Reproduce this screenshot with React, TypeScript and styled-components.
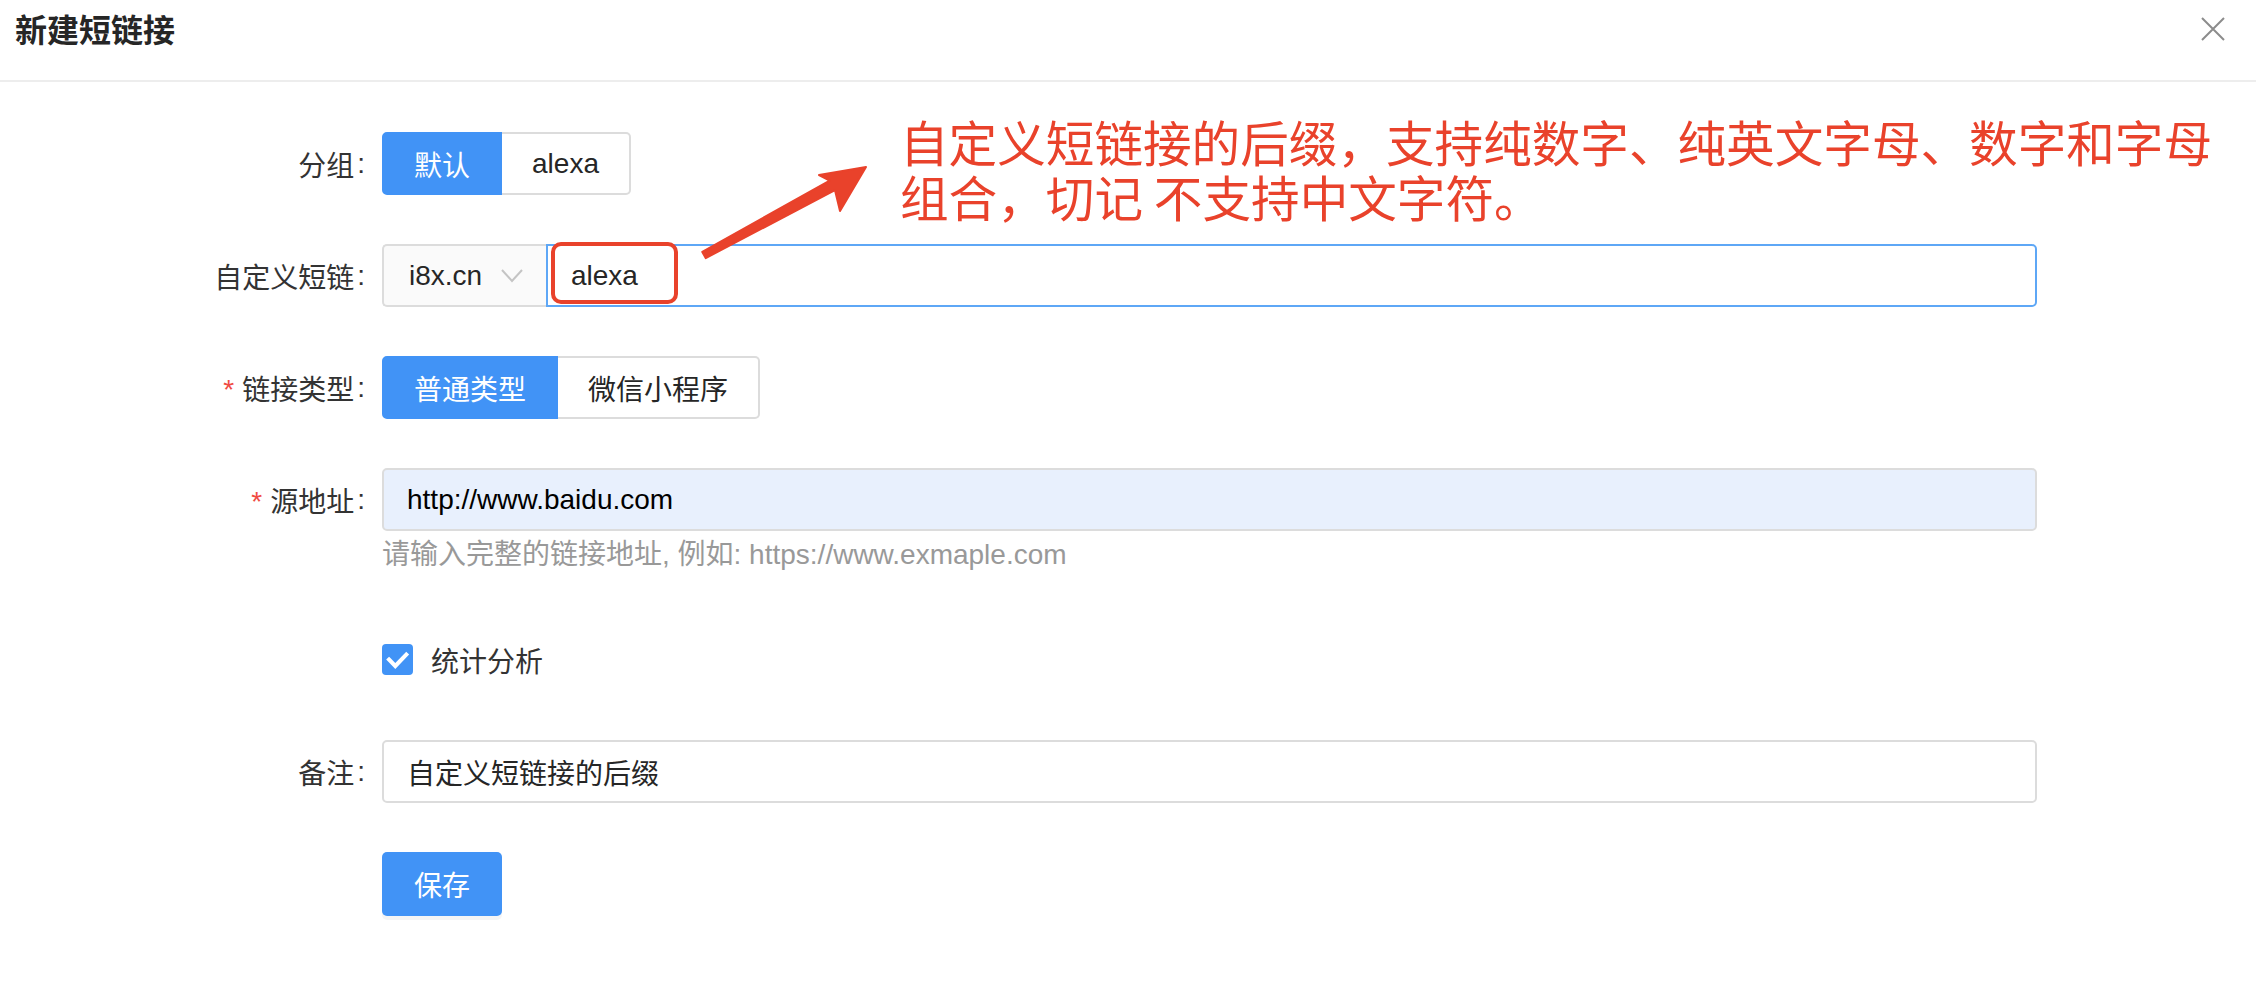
import React from "react";
import styled, { createGlobalStyle } from "styled-components";

const GlobalStyle = createGlobalStyle`
  html, body {
    margin: 0;
    padding: 0;
    background: #ffffff;
  }
  body {
    font-family: "Liberation Sans", "Noto Sans CJK SC", sans-serif;
    color: #262626;
  }
  * { box-sizing: border-box; }
`;

const BLUE = "#4193f6";
const RED = "#e9422b";

const Page = styled.div`
  position: relative;
  width: 2256px;
  height: 992px;
  background: #fff;
  overflow: hidden;
`;

const Header = styled.header`
  height: 82px;
  border-bottom: 2px solid #ededed;
  display: flex;
  align-items: flex-start;
  justify-content: space-between;
  padding: 12px 31px 0 15px;
`;

const Title = styled.h1`
  margin: 0;
  font-size: 32px;
  line-height: 32px;
  font-weight: 700;
  color: #262626;
  font-family: "Noto Sans CJK SC", sans-serif;
`;

const CloseButton = styled.button`
  border: none;
  background: transparent;
  padding: 0;
  margin-top: 5px;
  width: 24px;
  height: 24px;
  display: flex;
  cursor: pointer;
`;

const Body = styled.div`
  padding-top: 50px;
`;

const Form = styled.form`
  display: flex;
  flex-direction: column;
`;

const FormItem = styled.div<{ $gap?: number }>`
  display: grid;
  grid-template-columns: 382px 1655px;
  margin-bottom: ${(p) => (p.$gap ?? 49)}px;
`;

const Label = styled.label`
  height: 63px;
  display: flex;
  align-items: center;
  justify-content: flex-end;
  padding-right: 17px;
  font-size: 28px;
  color: #333;
  font-family: "Noto Sans CJK SC", sans-serif;
  white-space: nowrap;
`;

const Star = styled.span`
  color: #f04b43;
  font-family: "Liberation Sans", sans-serif;
  font-size: 28px;
  margin-right: 8px;
  position: relative;
  top: 2px;
`;

const Colon = styled.span`
  margin-left: 3px;
  font-family: "Liberation Sans", sans-serif;
`;

const Control = styled.div`
  display: flex;
  flex-direction: column;
  align-items: flex-start;
`;

const Segmented = styled.div`
  display: flex;
  height: 63px;
`;

const SegButton = styled.button<{ $active?: boolean; $first?: boolean; $last?: boolean }>`
  height: 63px;
  padding: 0 30px;
  font-size: 28px;
  font-family: "Liberation Sans", "Noto Sans CJK SC", sans-serif;
  border: 2px solid ${(p) => (p.$active ? BLUE : "#dcdcdc")};
  ${(p) => (!p.$first ? "border-left: none;" : "")}
  background: ${(p) => (p.$active ? BLUE : "#fff")};
  color: ${(p) => (p.$active ? "#fff" : "#262626")};
  border-radius: ${(p) =>
    p.$first ? "5px 0 0 5px" : p.$last ? "0 5px 5px 0" : "0"};
  cursor: pointer;
`;

const InputGroup = styled.div`
  position: relative;
  display: flex;
  width: 1655px;
  height: 63px;
`;

const Select = styled.div`
  flex: none;
  width: 164px;
  height: 63px;
  background: #fafafa;
  border: 2px solid #dcdcdc;
  border-right: none;
  border-radius: 5px 0 0 5px;
  display: flex;
  align-items: center;
  justify-content: space-between;
  padding: 0 23px 0 25px;
  font-size: 28px;
  color: #262626;
`;

const TextInput = styled.input<{ $focus?: boolean; $filled?: boolean; $grouped?: boolean }>`
  flex: ${(p) => (p.$grouped ? "1 1 auto" : "none")};
  width: ${(p) => (p.$grouped ? "auto" : "1655px")};
  min-width: 0;
  height: 63px;
  border: 2px solid ${(p) => (p.$focus ? "#5ea7f6" : "#dcdcdc")};
  border-radius: ${(p) => (p.$grouped ? "0 5px 5px 0" : "5px")};
  background: ${(p) => (p.$filled ? "#e8f0fd" : "#fff")};
  padding: 0 23px;
  font-size: 28px;
  font-family: "Liberation Sans", "Noto Sans CJK SC", sans-serif;
  color: ${(p) => (p.$filled ? "#000" : "#262626")};
  outline: none;
`;

const Help = styled.div`
  font-size: 28px;
  line-height: 44px;
  height: 48px;
  padding-top: 2px;
  color: #999;
  font-family: "Liberation Sans", "Noto Sans CJK SC", sans-serif;
`;

const Highlight = styled.div`
  position: absolute;
  left: 169px;
  top: -2px;
  width: 127px;
  height: 62px;
  border: 4px solid ${RED};
  border-radius: 10px;
  pointer-events: none;
`;

const CheckRow = styled.label`
  height: 63px;
  display: flex;
  align-items: center;
  gap: 18px;
  font-size: 28px;
  color: #333;
  font-family: "Noto Sans CJK SC", sans-serif;
`;

const CheckBox = styled.span`
  width: 31px;
  height: 31px;
  border-radius: 4px;
  background: ${BLUE};
  display: flex;
`;

const SaveButton = styled.button`
  width: 120px;
  height: 64px;
  border: none;
  border-radius: 5px;
  background: ${BLUE};
  color: #fff;
  font-size: 28px;
  font-family: "Noto Sans CJK SC", sans-serif;
  box-shadow: 0 4px 0 rgba(0, 0, 0, 0.04);
  cursor: pointer;
`;

const Annotation = styled.div`
  position: absolute;
  left: 900px;
  top: 114px;
  font-size: 48.6px;
  line-height: 55px;
  color: ${RED};
  font-family: "Noto Sans CJK SC", sans-serif;
  white-space: pre;
`;

const ArrowSvg = styled.svg`
  position: absolute;
  left: 0;
  top: 0;
  pointer-events: none;
`;

export default function App() {
  return (
    <Page>
      <GlobalStyle />
      <Header>
        <Title>新建短链接</Title>
        <CloseButton aria-label="close">
          <svg width="24" height="24" viewBox="0 0 24 24">
            <path d="M1 1 L23 23 M23 1 L1 23" stroke="#8c8c8c" strokeWidth="2" fill="none" />
          </svg>
        </CloseButton>
      </Header>
      <Body>
        <Form>
          <FormItem>
            <Label>分组<Colon>:</Colon></Label>
            <Control>
              <Segmented>
                <SegButton type="button" $active $first>默认</SegButton>
                <SegButton type="button" $last>alexa</SegButton>
              </Segmented>
            </Control>
          </FormItem>

          <FormItem>
            <Label>自定义短链<Colon>:</Colon></Label>
            <Control>
              <InputGroup>
                <Select>
                  <span>i8x.cn</span>
                  <svg width="22" height="14" viewBox="0 0 22 14">
                    <path d="M1 1 L11 12 L21 1" stroke="#c4c4c4" strokeWidth="2" fill="none" />
                  </svg>
                </Select>
                <TextInput $focus $grouped defaultValue="alexa" />
                <Highlight />
              </InputGroup>
            </Control>
          </FormItem>

          <FormItem>
            <Label><Star>*</Star>链接类型<Colon>:</Colon></Label>
            <Control>
              <Segmented>
                <SegButton type="button" $active $first>普通类型</SegButton>
                <SegButton type="button" $last>微信小程序</SegButton>
              </Segmented>
            </Control>
          </FormItem>

          <FormItem $gap={49}>
            <Label><Star>*</Star>源地址<Colon>:</Colon></Label>
            <Control>
              <TextInput $filled defaultValue="http://www.baidu.com" />
              <Help>请输入完整的链接地址, 例如: https://www.exmaple.com</Help>
            </Control>
          </FormItem>

          <FormItem>
            <Label />
            <Control>
              <CheckRow>
                <CheckBox>
                  <svg width="31" height="31" viewBox="0 0 31 31">
                    <path d="M7 15.5 L13.3 22 L24.3 10.5" stroke="#fff" strokeWidth="4" fill="none" strokeLinecap="square" />
                  </svg>
                </CheckBox>
                统计分析
              </CheckRow>
            </Control>
          </FormItem>

          <FormItem>
            <Label>备注<Colon>:</Colon></Label>
            <Control>
              <TextInput defaultValue="自定义短链接的后缀" />
            </Control>
          </FormItem>

          <FormItem>
            <Label />
            <Control>
              <SaveButton type="button">保存</SaveButton>
            </Control>
          </FormItem>
        </Form>
      </Body>

      <Annotation>{"自定义短链接的后缀，支持纯数字、纯英文字母、数字和字母\n组合，切记 不支持中文字符。"}</Annotation>
      <ArrowSvg width="2256" height="992" viewBox="0 0 2256 992">
        <polygon
          points="702.3,251.9 829.7,180.6 819,175 866,167 840,211 835,190.2 705.7,258.1"
          fill={RED}
          stroke={RED}
          strokeWidth="2"
          strokeLinejoin="round"
        />
      </ArrowSvg>
    </Page>
  );
}
